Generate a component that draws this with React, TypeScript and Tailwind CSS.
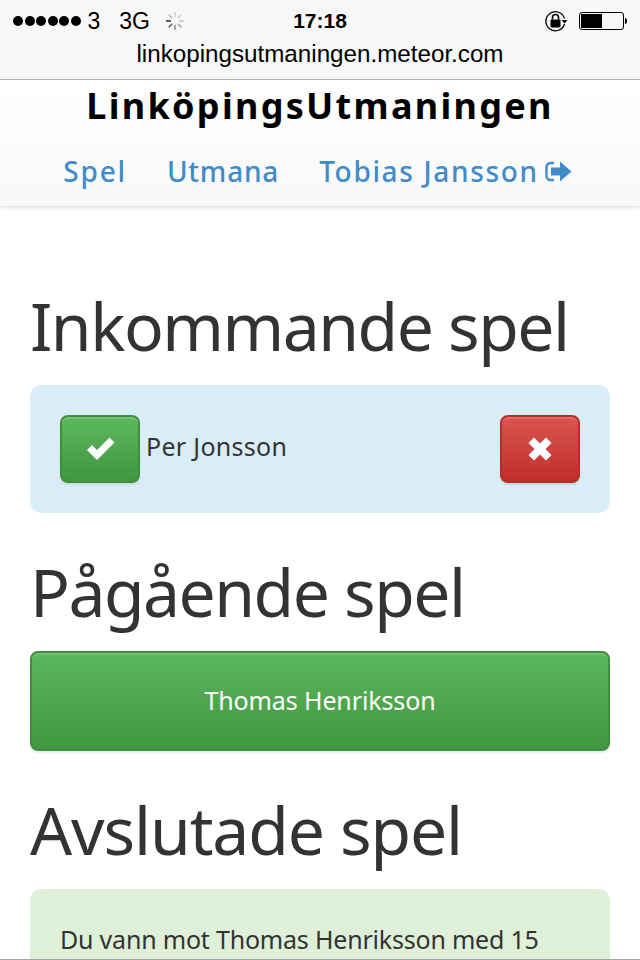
function BatteryIcon() {
  return (
    <svg width="50" height="20" viewBox="0 0 50 20">
      <rect x="0.5" y="1.500" width="44" height="17" rx="2.500" fill="none" stroke="#000" />
      <rect x="2" y="3" width="21" height="14" fill="#000" />
      <path d="M46 7c1.500 0 2 1.500 2 3s-.5 3-2 3z" fill="#000" />
    </svg>
  );
}

function LockIcon() {
  return (
    <svg width="24" height="24" viewBox="0 0 24 24">
      <path d="M20.500 9.500A9.500 9.500 0 1 0 20.500 15" fill="none" stroke="#000" strokeWidth="1.300" />
      <path d="M17.500 11h6l-3 3.500z" fill="#000" />
      <rect x="6.500" y="10.500" width="10" height="8" rx="1" fill="#000" />
      <path d="M8.500 10.500V8.500a3 3 0 0 1 6 0v2" fill="none" stroke="#000" strokeWidth="1.600" />
    </svg>
  );
}

function Spinner() {
  const lines = [0, 45, 90, 135, 180, 225, 270, 315];
  return (
    <svg width="20" height="20" viewBox="0 0 20 20">
      {lines.map((deg, i) => (
        <line
          key={deg}
          x1="10"
          y1="1"
          x2="10"
          y2="6"
          stroke="#000"
          strokeWidth="1.500"
          opacity={[0.15, 0.15, 0.2, 0.3, 0.45, 0.6, 0.8, 0.25][i]}
          transform={`rotate(${deg} 10 10)`}
        />
      ))}
    </svg>
  );
}

function ShareIcon() {
  return (
    <svg width="27" height="23" viewBox="0 0 27 23">
      <path d="M9 3H5.500A4 4 0 0 0 1.500 7v9a4 4 0 0 0 4 4H9" fill="none" stroke="#428bca" strokeWidth="2.400" />
      <path d="M6 7.500h9V1.500L26.500 11.500 15 21.500v-6H6z" fill="#428bca" />
    </svg>
  );
}

function CheckIcon() {
  return (
    <svg width="30" height="24" viewBox="0 0 30 24">
      <path d="M1 13l5-5 5 5L23.500 0.500l5 5L11 23z" fill="#fff" />
    </svg>
  );
}

function CrossIcon() {
  return (
    <svg width="24" height="24" viewBox="0 0 24 24">
      <path d="M6 0.500l6 6 6-6 5.500 5.500-6 6 6 6-5.500 5.500-6-6-6 6L0.500 18l6-6-6-6z" fill="#fff" />
    </svg>
  );
}

const greenBtn =
  "border-2 border-[#3e8f3e] bg-gradient-to-b from-[#5cb85c] to-[#419641] shadow-[inset_0_2px_0_rgba(255,255,255,0.15),0_2px_2px_rgba(0,0,0,0.08)]";
const heading =
  "text-[66px] leading-[80px] text-[#333]";

export default function App() {
  return (
    <div className="h-[960px] w-[640px] overflow-hidden border-b border-black/35 bg-white font-['Noto_Sans',sans-serif]">
      {/* STATUS + URL */}

      <div className="h-[80px] border-b border-[#b8b8b8] bg-[#f7f7f7] font-['Liberation_Sans',sans-serif] text-black">
        <div className="flex h-[42px] items-center justify-between pl-[13px] pr-[11px]">
          <div className="flex w-[238px] items-center text-[23px]">
            <div className="flex gap-[1.5px]">
              {[0, 1, 2, 3, 4, 5].map((i) => (
                <span key={i} className="h-[10px] w-[10px] rounded-full bg-black" />
              ))}
            </div>
            <span className="ml-[7px]">3</span>
            <span className="ml-[19px]">3G</span>
            <span className="ml-[15px] flex">
              <Spinner />
            </span>
          </div>
          <span className="text-[21px] font-bold">17:18</span>
          <div className="flex w-[240px] items-center justify-end gap-[11px]">
            <LockIcon />
            <BatteryIcon />
          </div>
        </div>
        <p className="text-center text-[24.2px] leading-[24px]">
          linkopingsutmaningen.meteor.com
        </p>
      </div>

      {/* NAV */}

      <nav className="flex h-[126px] flex-col items-center bg-gradient-to-b from-white to-[#f8f8f8] shadow-[0_1px_4px_rgba(0,0,0,0.18)]">
        <h1 className="mt-[3px] text-[36px] leading-[46px] font-bold tracking-[2.3px] text-black">
          LinköpingsUtmaningen
        </h1>
        <div className="mt-[22px] flex items-center gap-[40px] pr-[5px] text-[28px] leading-[40px] font-medium text-[#428bca]">
          <a className="tracking-[1.8px]">Spel</a>
          <a className="tracking-[0.8px]">Utmana</a>
          <a className="flex items-center gap-[6px] tracking-[1.66px]">
            Tobias Jansson
            <ShareIcon />
          </a>
        </div>
      </nav>

      {/* SPEL */}

      <main className="px-[30px] pt-[79px]">
        <h2 className={`${heading} tracking-[-1.5px]`}>Inkommande spel</h2>

        <div className="mt-[20px] flex h-[128px] items-center justify-between rounded-[12px] bg-[#d9edf7] px-[30px]">
          <div className="flex items-center gap-[6px]">
            <button className={`flex h-[68px] w-[80px] items-center justify-center rounded-[8px] pl-[2px] ${greenBtn}`}>
              <CheckIcon />
            </button>
            <span className="pb-[5px] text-[25px] tracking-[0.3px] text-[#333]">Per Jonsson</span>
          </div>
          <button className="flex h-[68px] w-[80px] items-center justify-center rounded-[8px] border-2 border-[#b92c28] bg-gradient-to-b from-[#d9534f] to-[#c12e2a] shadow-[inset_0_2px_0_rgba(255,255,255,0.15),0_2px_2px_rgba(0,0,0,0.08)]">
            <CrossIcon />
          </button>
        </div>

        <h2 className={`${heading} mt-[38px] tracking-[-1.5px]`}>Pågående spel</h2>

        <button className={`mt-[20px] h-[100px] w-full rounded-[8px] text-[25px] tracking-[-0.12px] text-white ${greenBtn}`}>
          Thomas Henriksson
        </button>

        <h2 className={`${heading} mt-[38px] tracking-[-1.1px]`}>Avslutade spel</h2>

        <div className="mt-[20px] rounded-[12px] bg-[#dff0d8] px-[30px] pt-[32px] pb-[30px] text-[25px] leading-[36px] tracking-[-0.2px] text-[#333]">
          Du vann mot Thomas Henriksson med 15
        </div>
      </main>
    </div>
  );
}
